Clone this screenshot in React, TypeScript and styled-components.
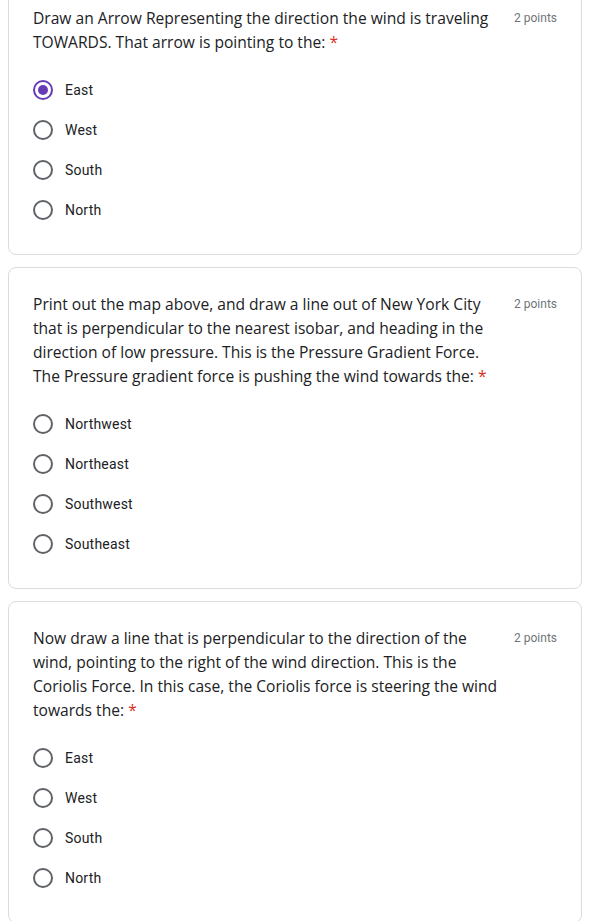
import React from "react";
import styled, { createGlobalStyle } from "styled-components";

const Global = createGlobalStyle`
  html, body { margin: 0; padding: 0; background: #fff; }
  body { overflow: hidden; }
`;

const Page = styled.div`
  display: flex;
  flex-direction: column;
  gap: 12px;
  padding: 0 7px 0 8px;
  margin-top: -19px;
`;

const Card = styled.section`
  border: 1px solid #dadce0;
  border-radius: 8px;
  background: #fff;
  padding: 24px;
  display: flex;
  flex-direction: column;
  gap: 16px;
`;

const Header = styled.div`
  display: flex;
  align-items: flex-start;
  justify-content: space-between;
`;

const Title = styled.div`
  font-family: "Open Sans", "Liberation Sans", sans-serif;
  font-size: 15.6px;
  line-height: 24px;
  color: #202124;
  max-width: 472px;
`;

const Required = styled.span`
  color: #d93025;
`;

const Points = styled.div`
  font-family: Roboto, "Liberation Sans", sans-serif;
  font-size: 12px;
  line-height: 24px;
  color: #70757a;
  white-space: nowrap;
  padding-left: 8px;
`;

const Options = styled.div`
  display: flex;
  flex-direction: column;
`;

const Option = styled.label`
  display: flex;
  align-items: center;
  gap: 12px;
  height: 40px;
`;

const Radio = styled.span<{ $checked?: boolean }>`
  box-sizing: border-box;
  width: 20px;
  height: 20px;
  border-radius: 50%;
  border: 2px solid ${(p) => (p.$checked ? "#673ab7" : "#5f6368")};
  display: flex;
  align-items: center;
  justify-content: center;
  flex: none;
  &::after {
    content: "";
    width: 10px;
    height: 10px;
    border-radius: 50%;
    background: #673ab7;
    display: ${(p) => (p.$checked ? "block" : "none")};
  }
`;

const OptionLabel = styled.span`
  font-family: Roboto, "Liberation Sans", sans-serif;
  font-size: 14px;
  letter-spacing: 0.2px;
  color: #202124;
`;

type Q = { title: string; options: string[]; selected?: number };

const questions: Q[] = [
  {
    title:
      "Draw an Arrow Representing the direction the wind is traveling TOWARDS. That arrow is pointing to the:",
    options: ["East", "West", "South", "North"],
    selected: 0,
  },
  {
    title:
      "Print out the map above, and draw a line out of New York City that is perpendicular to the nearest isobar, and heading in the direction of low pressure. This is the Pressure Gradient Force. The Pressure gradient force is pushing the wind towards the:",
    options: ["Northwest", "Northeast", "Southwest", "Southeast"],
  },
  {
    title:
      "Now draw a line that is perpendicular to the direction of the wind, pointing to the right of the wind direction. This is the Coriolis Force. In this case, the Coriolis force is steering the wind towards the:",
    options: ["East", "West", "South", "North"],
  },
];

export default function App() {
  return (
    <>
      <Global />
      <Page>
        {questions.map((q, i) => (
          <Card key={i}>
            <Header>
              <Title>
                {q.title} <Required>*</Required>
              </Title>
              <Points>2 points</Points>
            </Header>
            <Options>
              {q.options.map((o, j) => (
                <Option key={j}>
                  <Radio $checked={q.selected === j} />
                  <OptionLabel>{o}</OptionLabel>
                </Option>
              ))}
            </Options>
          </Card>
        ))}
      </Page>
    </>
  );
}
